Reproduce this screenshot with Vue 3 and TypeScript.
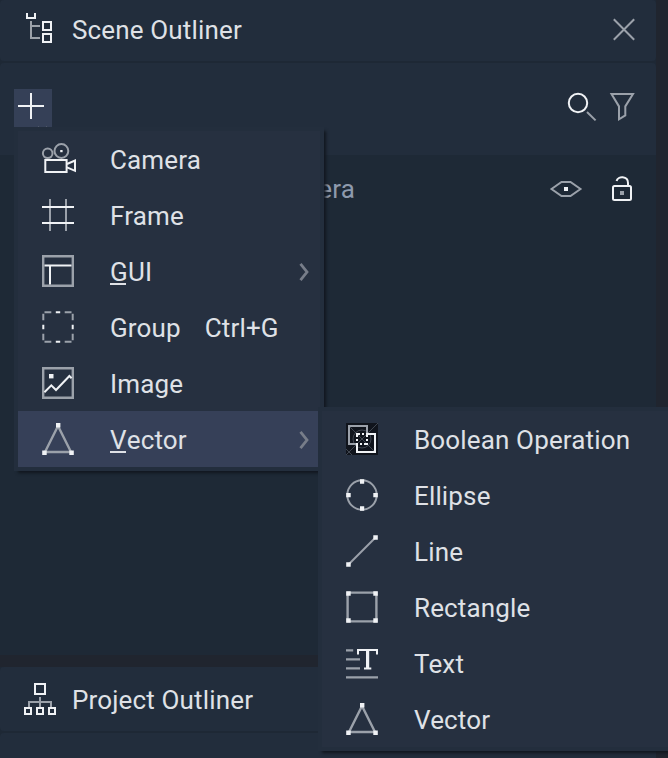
<script setup lang="ts">
interface Stroke {
  d: string
  c: string
}

interface MenuItem {
  id: string
  label: string
  icon: Stroke[]
  mnemonic?: boolean
  shortcut?: string
  submenu?: boolean
  active?: boolean
}

const triangle: Stroke[] = [
  { c: 'gray wide', d: 'M16 3L3 29H29Z' },
  { c: 'solid', d: 'M14 0h4.4v4.4h-4.4zM.2 27.4h4.5v4.5h-4.5zM27.3 27.4h4.5v4.5h-4.5z' },
]

const mainItems: MenuItem[] = [
  {
    id: 'camera',
    label: 'Camera',
    icon: [
      { c: 'gray', d: 'M.9 10.3a4.8 4.8 0 1 0 9.6 0a4.8 4.8 0 1 0-9.6 0M12.5 8a6.9 6.9 0 1 0 13.8 0a6.9 6.9 0 1 0-13.8 0' },
      { c: 'solid', d: 'M18.2 7h2.4v2.2h-2.4z' },
      { c: 'white', d: 'M3.3 17H24.6V29H3.3Z' },
      { c: 'white', d: 'M25 21L33 17.6V27.8L25 24.4' },
    ],
  },
  {
    id: 'frame',
    label: 'Frame',
    icon: [
      { c: 'gray', d: 'M8 0V32M24 0V32' },
      { c: 'white', d: 'M0 8H32M0 24H32' },
    ],
  },
  {
    id: 'gui',
    label: 'GUI',
    mnemonic: true,
    submenu: true,
    icon: [
      { c: 'gray wide', d: 'M1.2 1.2H30.8V30.8H1.2Z' },
      { c: 'white', d: 'M2.5 10.4H29.5M8 10.4V29.5' },
    ],
  },
  {
    id: 'group',
    label: 'Group',
    shortcut: 'Ctrl+G',
    icon: [
      { c: 'gray', d: 'M9.3 1.3H2.5M1.3 2.8V9.3M22.7 1.3H29.5M30.7 2.8V9.3M9.3 30.7H2.5M1.3 29.2V22.7M22.7 30.7H29.5M30.7 29.2V22.7' },
      { c: 'white', d: 'M13.8 1.3H18.2M13.8 30.7H18.2M1.3 13.8V18.2M30.7 13.8V18.2' },
    ],
  },
  {
    id: 'image',
    label: 'Image',
    icon: [
      { c: 'gray wide', d: 'M1.2 1.2H30.8V30.8H1.2Z' },
      { c: 'solid', d: 'M7 7h4.5v4.4h-4.5z' },
      { c: 'white', d: 'M2.4 25.3L9.3 18.3L14 23L27.4 9L29.6 11.2' },
    ],
  },
  { id: 'vector', label: 'Vector', mnemonic: true, submenu: true, active: true, icon: triangle },
]

const vectorItems: MenuItem[] = [
  {
    id: 'boolean',
    label: 'Boolean Operation',
    icon: [
      { c: 'black', d: 'M0 0H32V32H0Z' },
      { c: 'faint', d: 'M32 0L0 32M2 2L30 30M0 26L6 32M7 16a9 9 0 1 0 18 0a9 9 0 1 0-18 0' },
      { c: 'gray', d: 'M10 21H3V3H21V10' },
      { c: 'white', d: 'M22 11H29V29H11V22' },
      { c: 'solid', d: 'M10 10h4v2h-2v2h-2zM16 10h2v2h-2zM20 10h2v4h-2zM10 16h2v2h-2zM20 16h2v2h-2zM10 20h2v2h-2zM14 20h2v2h-2zM18 20h4v2h-4z' },
    ],
  },
  {
    id: 'ellipse',
    label: 'Ellipse',
    icon: [
      { c: 'gray', d: 'M1.3 16a14.7 14.7 0 1 0 29.4 0a14.7 14.7 0 1 0-29.4 0' },
      { c: 'solid', d: 'M14 .2h4.2v4.5h-4.2zM14 27.3h4.2v4.5h-4.2zM.2 14h4.5v4.2h-4.5zM27.3 14h4.5v4.2h-4.5z' },
    ],
  },
  {
    id: 'line',
    label: 'Line',
    icon: [
      { c: 'gray', d: 'M3 29L29 3' },
      { c: 'solid', d: 'M27.3 .2h4.5v4.5h-4.5zM.2 27.3h4.5v4.5h-4.5z' },
    ],
  },
  {
    id: 'rectangle',
    label: 'Rectangle',
    icon: [
      { c: 'gray wide', d: 'M1.6 1.6H30.4V30.4H1.6Z' },
      { c: 'solid', d: 'M.2 .2h4.5v4.5h-4.5zM27.3 .2h4.5v4.5h-4.5zM.2 27.3h4.5v4.5h-4.5zM27.3 27.3h4.5v4.5h-4.5z' },
    ],
  },
  {
    id: 'text',
    label: 'Text',
    icon: [
      { c: 'gray wide', d: 'M0 3.4H7.2M0 12.4H14M0 21.4H14M0 30.4H32' },
      { c: 'white', d: 'M12 7.4V3.1H31V7.4M18 21.6H25.3' },
      { c: 'white thick', d: 'M21.6 3V22' },
    ],
  },
  { id: 'vector-shape', label: 'Vector', icon: triangle },
]
</script>

<template>
  <div class="app">
    <section class="scene">
      <header class="head">
        <svg class="icon" viewBox="24 14 32 32">
          <path class="white" d="M27 13V18H35V13" />
          <path class="gray" d="M31 21V38H40M31 26H40" />
          <path class="white" d="M43 22H51V30H43ZM43 34H51V42H43Z" />
        </svg>
        <h1>Scene Outliner</h1>
        <svg class="close" viewBox="0 0 22 22"><path class="gray" d="M.8 .3L21.2 20.7M21.2 .3L.8 20.7" /></svg>
      </header>
      <div class="toolbar">
        <button class="add" aria-label="Add">
          <svg viewBox="0 0 38 38">
            <path class="white" d="M4 17H30M17 4V30" />
            <path class="faint" d="M24 37.5H25M32 37.5H33" />
          </svg>
        </button>
        <div class="tools">
          <svg viewBox="567 92 30 30">
            <circle class="white" cx="578" cy="103" r="9.2" />
            <path class="gray" d="M587 112L595.6 120.4" />
          </svg>
          <svg viewBox="609 92 30 30">
            <path class="gray" d="M611.5 94H633L625.3 106.4V115.4L619 119.3V106.4Z" />
          </svg>
        </div>
      </div>
      <div class="list">
        <div class="entry">
          <span class="entry-name">Camera</span>
          <svg class="eye" viewBox="550 174 32 30">
            <path class="gray" d="M551.5 189L561.5 181.9H570.5L580.5 189L570.5 196.1H561.5Z" />
            <path class="solid" d="M564 187h4v4h-4z" />
          </svg>
          <svg class="lock" viewBox="610 174 24 30">
            <rect class="white" x="613" y="186" width="18" height="14" rx="1.5" />
            <path class="white" d="M616.6 181C617.8 175.8 628 175.8 628 183V186" />
            <path class="solid dim" d="M620 191h4v4h-4z" />
          </svg>
        </div>
      </div>
    </section>
    <section class="project">
      <header class="head">
        <svg class="icon" viewBox="24 683 32 32">
          <path class="white" d="M35 684H45V694H35ZM25 708H31V714H25ZM37 708H43V714H37ZM49 708H55V714H49Z" />
          <path class="gray" d="M40 697V707M29 707V702H51V707" />
        </svg>
        <h1>Project Outliner</h1>
      </header>
      <div class="rest"></div>
    </section>

    <ul class="menu main">
      <li v-for="item in mainItems" :key="item.id" :class="{ active: item.active }">
        <svg class="icon" viewBox="0 0 32 32"><path v-for="(s, i) in item.icon" :key="i" :class="s.c" :d="s.d" /></svg>
        <span class="label"><template v-if="item.mnemonic"><span class="key">{{ item.label[0] }}</span>{{ item.label.slice(1) }}</template><template v-else>{{ item.label }}</template></span>
        <span v-if="item.shortcut" class="shortcut">{{ item.shortcut }}</span>
        <svg v-if="item.submenu" class="chevron" viewBox="0 0 10 18"><path d="M1.5 .8L8 9L1.5 17.2" /></svg>
      </li>
    </ul>
    <ul class="menu sub">
      <li v-for="item in vectorItems" :key="item.id">
        <svg class="icon" viewBox="0 0 32 32"><path v-for="(s, i) in item.icon" :key="i" :class="s.c" :d="s.d" /></svg>
        <span class="label">{{ item.label }}</span>
      </li>
    </ul>
  </div>
</template>

<style>
body {
  background: #20252f;
  overflow: hidden;
}
</style>

<style scoped>
.app {
  position: relative;
  width: 668px;
  height: 758px;
  overflow: hidden;
  display: flex;
  flex-direction: column;
  gap: 12px;
  background: #20252f;
  color: #dfe1e6;
  font: 400 26px/32px Roboto, sans-serif;
  letter-spacing: 0.15px;
}
.scene,
.project {
  width: 656px;
  display: flex;
  flex-direction: column;
  gap: 2px;
  background: #1e2835;
}
.scene {
  height: 655px;
}
.project {
  flex: 1;
}
.head {
  display: flex;
  align-items: center;
  height: 64px;
  padding: 0 21px 0 24px;
  background: #222d3c;
  border-radius: 4px;
}
.scene .head {
  height: 61px;
  padding-bottom: 1px;
  box-sizing: border-box;
}
h1 {
  margin: 0 auto 0 16px;
  font: inherit;
}
.project h1 {
  padding-top: 2px;
}
svg {
  display: block;
  flex: none;
  fill: none;
  stroke-width: 2;
  overflow: visible;
}
.icon {
  width: 32px;
  height: 32px;
}
.close {
  width: 22px;
  height: 22px;
}
.toolbar {
  display: flex;
  justify-content: space-between;
  height: 66px;
  padding: 26px 17px 0 14px;
  background: #222d3c;
  border-radius: 4px 4px 0 0;
}
.add {
  width: 38px;
  height: 38px;
  padding: 0;
  border: 0;
  background: #354057;
}
.tools {
  display: flex;
  gap: 12px;
  padding-top: 3px;
}
.tools svg {
  width: 30px;
  height: 30px;
}
.list {
  flex: 1;
  margin-top: -2px;
  background: #1e2936;
}
.entry {
  display: flex;
  align-items: center;
  height: 68px;
  padding: 0 22px 0 264px;
}
.entry-name {
  flex: 1;
  color: #8e9aad;
}
.eye {
  width: 32px;
  height: 30px;
}
.lock {
  width: 24px;
  height: 30px;
  margin-left: 28px;
}
.rest {
  flex: 1;
  background: #222d3c;
  border-radius: 4px 4px 0 0;
}
.menu {
  position: absolute;
  margin: 0;
  padding: 0;
  list-style: none;
  background: #263040;
  border: 4px solid #232e3d;
  box-shadow: 3px 3px 3px -1px #10161e;
}
.main {
  left: 14px;
  top: 127px;
  width: 302px;
}
.sub {
  left: 318px;
  top: 407px;
  width: 360px;
}
.menu li {
  display: flex;
  align-items: center;
  height: 56px;
  padding: 0 11px 0 24px;
  box-sizing: border-box;
}
.main li {
  width: 300px;
  padding-right: 9px;
}
.menu li.active {
  background: #364058;
}
.label {
  margin-left: 36px;
  padding-top: 2px;
}
.key {
  display: inline-block;
  height: 29px;
  line-height: 32px;
  vertical-align: top;
  background: linear-gradient(#dfe1e6, #dfe1e6) left bottom / 16px 2px no-repeat;
}
.shortcut {
  margin-left: 24px;
  padding-top: 2px;
}
.chevron {
  width: 10px;
  height: 18px;
  margin: 2px 0 0 auto;
  stroke: #777d89;
  stroke-width: 2.8;
}
.gray {
  stroke: #9ba1aa;
}
.white {
  stroke: #f0f2f5;
}
.wide {
  stroke-width: 2.4;
}
.thick {
  stroke-width: 3.2;
}
.solid {
  fill: #f0f2f5;
}
.dim {
  fill: #9ba1aa;
}
.black {
  fill: #10141c;
}
.faint {
  stroke: #626873;
  stroke-width: 0.6;
}
</style>
